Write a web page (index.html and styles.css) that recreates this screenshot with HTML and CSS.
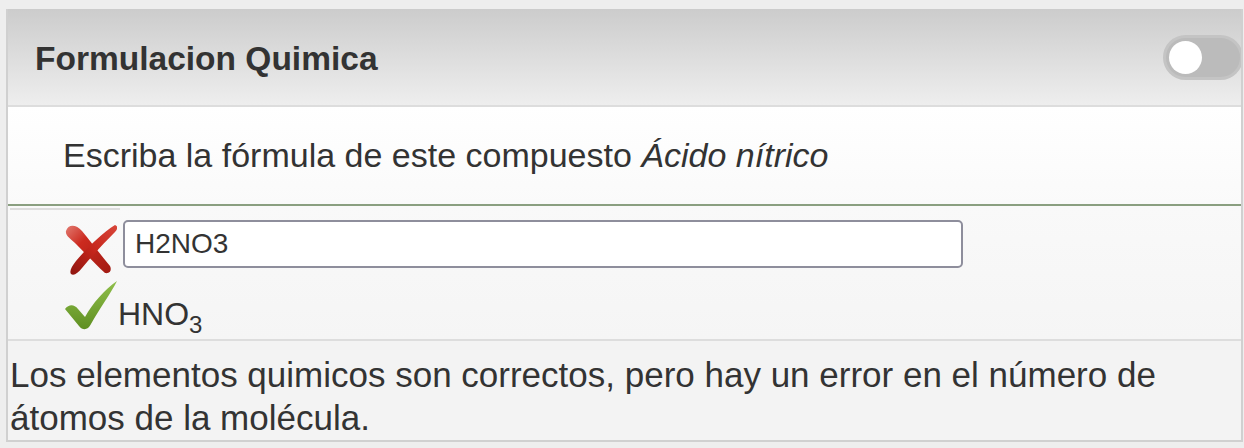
FILE: index.html
```html
<!DOCTYPE html>
<html lang="es">
<head>
    <meta charset="UTF-8">
    <meta name="viewport" content="width=device-width, initial-scale=1.0">
    <title>Formulacion Quimica</title>
    <link rel="stylesheet" href="styles.css">
</head>
<body>
    <div class="card">
        <div class="card-header">
            <h2 class="card-title">Formulacion Quimica</h2>
            <span class="toggle"><span class="toggle-knob"></span></span>
        </div>

        <div class="question">
            Escriba la fórmula de este compuesto <em>Ácido nítrico</em>
        </div>

        <div class="answers">
            <div class="tick-line"></div>
            <div class="answer-row wrong">
                <svg class="mark" viewBox="0 0 52 52" width="52" height="52">
                    <defs>
                        <linearGradient id="redA" x1="0" y1="0" x2="1" y2="1">
                            <stop offset="0" stop-color="#e27a70"/>
                            <stop offset="0.35" stop-color="#cc2a1f"/>
                            <stop offset="1" stop-color="#a11b13"/>
                        </linearGradient>
                        <linearGradient id="redB" x1="1" y1="0" x2="0" y2="1">
                            <stop offset="0" stop-color="#d8463a"/>
                            <stop offset="0.5" stop-color="#c6261c"/>
                            <stop offset="1" stop-color="#8e150f"/>
                        </linearGradient>
                    </defs>
                    <path fill="url(#redA)" d="M1,8 C3,1 11,1 17,8 C26,19 35,31 45,43 C47,47 45,51 40,50 C31,42 21,31 11,21 C6,16 0,13 1,8 Z"/>
                    <path fill="url(#redB)" d="M50,2 C53,3 53,6 50,9 C40,19 27,33 17,45 C13,50 9,53 6,51 C4,48 7,43 11,38 C22,25 36,11 50,2 Z"/>
                </svg>
                <input class="answer-input" type="text" value="H2NO3">
            </div>
            <div class="answer-row right">
                <svg class="mark" viewBox="0 0 52 52" width="52" height="52">
                    <defs>
                        <linearGradient id="green" x1="0" y1="0" x2="0" y2="1">
                            <stop offset="0" stop-color="#8fbf4a"/>
                            <stop offset="1" stop-color="#5f8f22"/>
                        </linearGradient>
                    </defs>
                    <path fill="url(#green)" d="M0,29 C4,24 9,24 13,29 L20,37 C28,23 39,10 52,1 C46,13 35,28 26,44 C23,50 18,51 14,46 Z"/>
                </svg>
                <span class="formula">HNO<sub>3</sub></span>
            </div>
        </div>

        <div class="feedback">
            Los elementos quimicos son correctos, pero hay un error en el número de átomos de la molécula.
        </div>
    </div>
</body>
</html>
```

FILE: styles.css
```css
body {
    margin: 0;
    background: #eeeeee;
    font-family: "Liberation Sans", Arial, Helvetica, sans-serif;
    color: #333333;
}

.card {
    margin: 9px 1px 6px 6px;
    border-left: 2px solid #d0d0d0;
    border-right: 2px solid #d0d0d0;
    border-bottom: 2px solid #d0d0d0;
    overflow: hidden;
}

.card-header {
    display: flex;
    align-items: center;
    justify-content: space-between;
    height: 92px;
    padding: 4px 0 0 27px;
    background: linear-gradient(#cccccc, #eeeeee);
    border-bottom: 2px solid #dddddd;
}

.card-title {
    margin: 0;
    font-size: 33.5px;
    font-weight: bold;
    color: #333333;
}

.toggle {
    display: block;
    width: 80px;
    height: 45px;
    margin-right: -2px;
    margin-bottom: 4px;
    box-sizing: border-box;
    border: 3px solid #c4c4c4;
    border-radius: 23px;
    background: #bbbbbb;
    padding: 3px;
}

.toggle-knob {
    display: block;
    width: 33px;
    height: 33px;
    border-radius: 50%;
    background: #ffffff;
}

.question {
    display: flex;
    align-items: center;
    height: 97px;
    padding-left: 55px;
    font-size: 34px;
    background: linear-gradient(#ffffff, #fafafa);
    border-bottom: 2px solid #8a9f80;
}

.question em {
    margin-left: 0.28em;
}

.answers {
    height: 129px;
    padding: 2px 0 2px;
    background: linear-gradient(#f9f9f9, #f5f5f5);
    border-bottom: 2px solid #dddddd;
}

.tick-line {
    width: 110px;
    height: 2px;
    margin-left: 2px;
    background: #dddddd;
}

.answer-row {
    display: flex;
    padding-left: 57px;
}

.answer-row.wrong {
    margin-top: 10px;
    align-items: flex-start;
    gap: 6px;
}

.answer-row.wrong .mark {
    margin-top: 3px;
}

.answer-row.right {
    margin-top: 5px;
    align-items: flex-end;
    gap: 1px;
}

.answer-input {
    width: 840px;
    height: 48px;
    box-sizing: border-box;
    margin: 0;
    padding: 0 10px;
    font-family: "Liberation Sans", Arial, sans-serif;
    font-size: 28px;
    color: #333333;
    background: #ffffff;
    border: 2px solid #8e8e9c;
    border-radius: 5px;
}

.formula {
    font-size: 32px;
    line-height: 36px;
}

.formula sub {
    font-size: 24px;
    vertical-align: -8px;
    line-height: 0;
}

.feedback {
    height: 86px;
    padding: 12px 2px 1px;
    font-size: 35px;
    line-height: 43px;
    background: #f3f3f3;
}
```
